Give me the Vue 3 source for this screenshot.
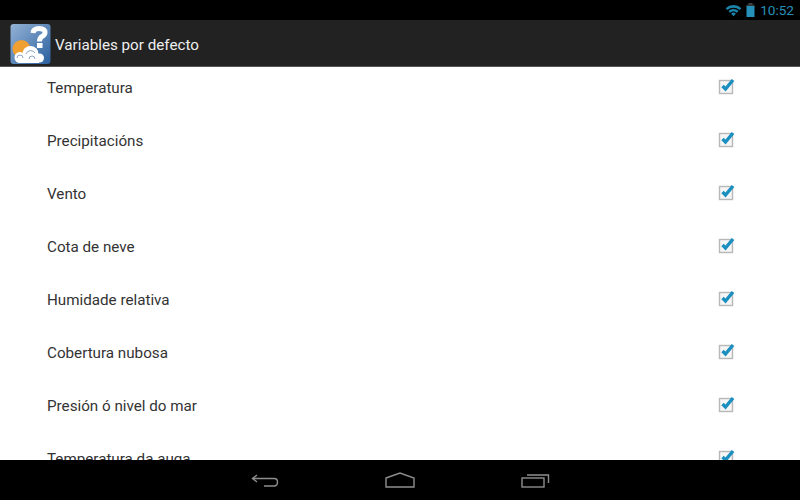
<script setup>
const items = ['Temperatura','Precipitacións','Vento','Cota de neve','Humidade relativa','Cobertura nubosa','Presión ó nivel do mar','Temperatura da auga']
</script>

<template>
  <div class="screen">
    <div class="status">
      <svg class="wifi" width="17" height="13" viewBox="0 0 18 14">
        <path d="M0.5 4.5 A12.5 12.5 0 0 1 17.5 4.5 L15.6 6.5 A10 10 0 0 0 2.4 6.5 Z" fill="#1b84ab"/>
        <path d="M3.6 7.6 A8 8 0 0 1 14.4 7.6 L12.7 9.4 A5.6 5.6 0 0 0 5.3 9.4 Z" fill="#1b84ab"/>
        <path d="M6.4 10.4 A3.8 3.8 0 0 1 11.6 10.4 L9 13.2 Z" fill="#1b84ab"/>
      </svg>
      <svg class="batt" width="9" height="14" viewBox="0 0 9 14">
        <rect x="2.5" y="0" width="4" height="2" fill="#444"/>
        <rect x="0.5" y="1.5" width="8" height="2" fill="#333"/>
        <rect x="0.5" y="3" width="8" height="11" fill="#2590b8"/>
      </svg>
      <span class="time">10:52</span>
    </div>
    <div class="bar">
      <svg class="logo" width="41" height="41" viewBox="0 0 41 41">
        <defs>
          <linearGradient id="sky" x1="0" y1="0" x2="1" y2="1">
            <stop offset="0" stop-color="#94b3d6"/>
            <stop offset="1" stop-color="#2a5f9e"/>
          </linearGradient>
        </defs>
        <rect x="0.5" y="1" width="40" height="40" rx="3" fill="url(#sky)"/>
        <circle cx="11.5" cy="26" r="9" fill="#f0a030"/>
        <g fill="#fff">
          <circle cx="10" cy="34.5" r="5.5"/>
          <circle cx="20.5" cy="31" r="8"/>
          <circle cx="29.5" cy="35" r="4.5"/>
          <rect x="9" y="33" width="20" height="7"/>
        </g>
        <path d="M7 35 a3 3 0 0 1 6 0 M16 31 a5 5 0 0 1 9 -1 M19 36 a3 3 0 0 1 6 0" fill="none" stroke="#8ea6c2" stroke-width="1"/>
        <path d="M23 10 Q23.5 5.5 29 5.5 Q35 5.5 35 9.5 Q35 12 32 13.5 Q29.5 15 29.5 18.5" fill="none" stroke="#fff" stroke-width="5"/>
        <rect x="27" y="20" width="5.5" height="5" fill="#fff"/>
      </svg>
      <span class="title">Variables por defecto</span>
    </div>
    <div class="list">
      <div class="rows">
        <div v-for="item in items" :key="item" class="row">
          <span class="label">{{ item }}</span>
          <svg class="check" width="18" height="18" viewBox="0 0 18 18">
            <rect x="1.5" y="3.5" width="13" height="13" fill="#f6f6f6" stroke="#b8b8b8" stroke-width="1.4"/>
            <path d="M4.5 9 L7.5 12 L15 3" fill="none" stroke="#1a8fc0" stroke-width="3.4"/>
          </svg>
        </div>
      </div>
    </div>
    <div class="nav">
      <svg width="28" height="16" viewBox="0 0 28 16" fill="none" stroke="#8e8e8e" stroke-width="1.4">
        <path d="M6 3 L1.5 6.5 L6 10"/>
        <path d="M1.5 6.5 H23 Q26.5 6.5 26.5 10 Q26.5 14 23 14 H13"/>
      </svg>
      <svg width="30" height="16" viewBox="0 0 30 16" fill="none" stroke="#8e8e8e" stroke-width="1.4">
        <path d="M1 6 L15 1 L29 6 V15 H1 Z"/>
      </svg>
      <svg width="29" height="16" viewBox="0 0 29 16" fill="none" stroke="#8e8e8e" stroke-width="1.4">
        <rect x="1" y="6" width="22" height="9"/>
        <path d="M6 3 H27.5 V11"/>
      </svg>
    </div>
  </div>
</template>

<style scoped>
.screen {
  width: 800px;
  height: 500px;
  display: flex;
  flex-direction: column;
  background: #fff;
  font-family: Roboto, "Liberation Sans", sans-serif;
  overflow: hidden;
}
.status {
  height: 20px;
  flex: none;
  background: #000;
  display: flex;
  align-items: center;
  justify-content: flex-end;
  padding-right: 6px;
}
.wifi { margin-right: 4px; }
.batt { margin-right: 5px; }
.time { color: #2590b8; font-size: 13.6px; }
.bar {
  height: 47px;
  flex: none;
  background: #222;
  border-bottom: 1px solid #555;
  box-sizing: border-box;
  display: flex;
  align-items: center;
  padding-left: 10px;
}
.logo { margin-right: 4px; }
.title { color: #eee; font-size: 15.2px; margin-top: 4px; }
.list { flex: 1; overflow: hidden; }
.rows { margin-top: -6px; padding: 0 64px 0 47px; }
.row {
  height: 53px;
  display: flex;
  align-items: center;
  justify-content: space-between;
}
.label { color: #333; font-size: 15.2px; margin-top: 1px; }
.check { margin-top: -3px; }
.nav {
  height: 40px;
  flex: none;
  background: #000;
  display: flex;
  align-items: center;
  justify-content: center;
  gap: 106px;
}
</style>
